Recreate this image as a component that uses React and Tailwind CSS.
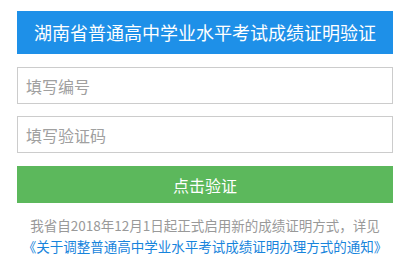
export default function App() {
  return (
    <div
      className="w-[410px] h-[261px] bg-white pt-[11px] px-[17px]"
      style={{ fontFamily: '"Noto Sans CJK SC", "Noto Sans", sans-serif' }}
    >
      <div className="h-[43px] bg-[#1e90e8] flex items-center justify-center text-white text-[18px]">
        湖南省普通高中学业水平考试成绩证明验证
      </div>
      <div className="mt-[13px] flex flex-col gap-[12px]">
        <input
          placeholder="填写编号"
          className="h-[37px] w-full border border-[#cccccc] px-[8px] text-[16px] outline-none placeholder:text-[#a0a0a0]"
        />
        <input
          placeholder="填写验证码"
          className="h-[37px] w-full border border-[#cccccc] px-[8px] text-[16px] outline-none placeholder:text-[#a0a0a0]"
        />
      </div>
      <button className="mt-[13px] h-[37px] w-full bg-[#5cb85c] text-white text-[16px]">
        点击验证
      </button>
      <div className="mt-[12px] text-center text-[13.5px] leading-[21px] whitespace-nowrap">
        <p className="text-[#999999]">我省自2018年12月1日起正式启用新的成绩证明方式，详见</p>
        <a href="#" className="text-[#1784dc]">
          《关于调整普通高中学业水平考试成绩证明办理方式的通知》
        </a>
      </div>
    </div>
  )
}
